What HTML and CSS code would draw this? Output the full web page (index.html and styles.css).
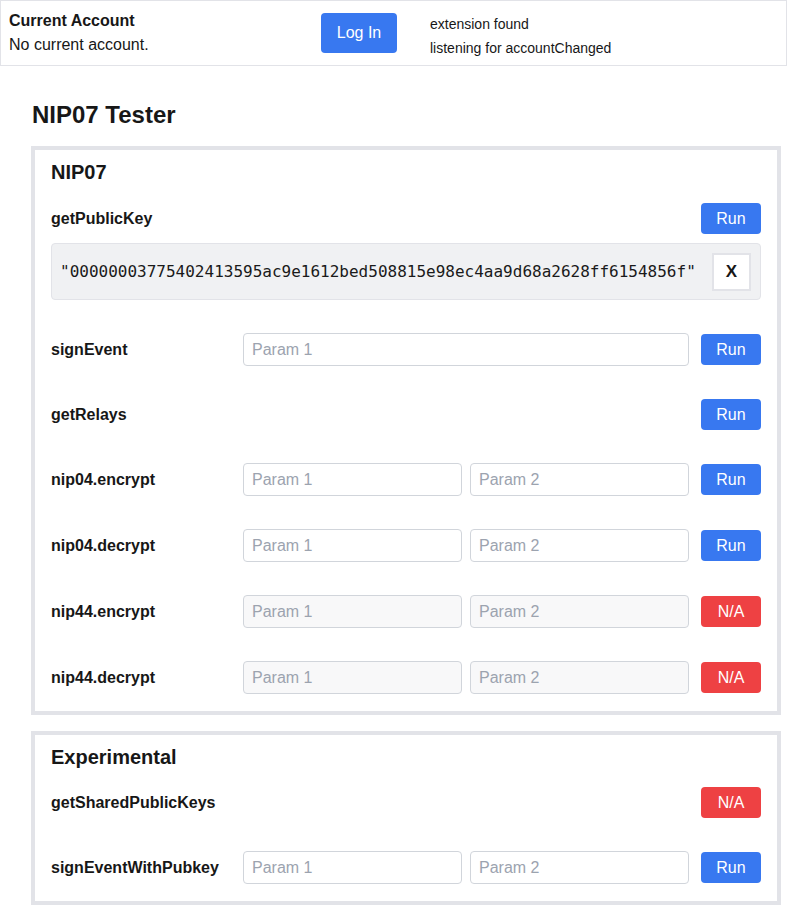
FILE: index.html
```html
<!DOCTYPE html>
<html lang="en">
<head>
<meta charset="utf-8">
<title>NIP07 Tester</title>
<link rel="stylesheet" href="styles.css">
</head>
<body>
<header class="topbar">
  <div class="account">
    <div class="account-title">Current Account</div>
    <div class="account-value">No current account.</div>
  </div>
  <button class="btn login">Log In</button>
  <div class="status">
    <div>extension found</div>
    <div>listening for accountChanged</div>
  </div>
</header>

<main class="main">
  <h1 class="page-title">NIP07 Tester</h1>

  <section class="card">
    <h2 class="card-title">NIP07</h2>

    <div class="row first">
      <div class="label">getPublicKey</div>
      <button class="btn run push">Run</button>
    </div>
    <div class="result">
      <span class="result-text">"00000003775402413595ac9e1612bed508815e98ec4aa9d68a2628ff6154856f"</span>
      <button class="close">X</button>
    </div>

    <div class="row">
      <div class="label">signEvent</div>
      <input class="param" placeholder="Param 1">
      <button class="btn run">Run</button>
    </div>

    <div class="row">
      <div class="label">getRelays</div>
      <button class="btn run push">Run</button>
    </div>

    <div class="row">
      <div class="label">nip04.encrypt</div>
      <input class="param" placeholder="Param 1">
      <input class="param" placeholder="Param 2">
      <button class="btn run">Run</button>
    </div>

    <div class="row">
      <div class="label">nip04.decrypt</div>
      <input class="param" placeholder="Param 1">
      <input class="param" placeholder="Param 2">
      <button class="btn run">Run</button>
    </div>

    <div class="row">
      <div class="label">nip44.encrypt</div>
      <input class="param" placeholder="Param 1" disabled>
      <input class="param" placeholder="Param 2" disabled>
      <button class="btn na">N/A</button>
    </div>

    <div class="row">
      <div class="label">nip44.decrypt</div>
      <input class="param" placeholder="Param 1" disabled>
      <input class="param" placeholder="Param 2" disabled>
      <button class="btn na">N/A</button>
    </div>
  </section>

  <section class="card">
    <h2 class="card-title">Experimental</h2>

    <div class="row first">
      <div class="label">getSharedPublicKeys</div>
      <button class="btn na push">N/A</button>
    </div>

    <div class="row">
      <div class="label">signEventWithPubkey</div>
      <input class="param" placeholder="Param 1">
      <input class="param" placeholder="Param 2">
      <button class="btn run">Run</button>
    </div>
  </section>
</main>
</body>
</html>
```

FILE: styles.css
```css
* { box-sizing: border-box; }

body {
  margin: 0;
  background: #ffffff;
  color: #171717;
  font-family: "Liberation Sans", Arial, sans-serif;
  font-size: 16px;
}

.topbar {
  display: flex;
  align-items: flex-start;
  border: 1px solid #e2e3e8;
  padding: 8px 8px;
  height: 66px;
}

.account {
  width: 312px;
  line-height: 24px;
}

.account-title { font-weight: bold; }

.btn {
  font-family: "Liberation Sans", Arial, sans-serif;
  font-size: 16px;
  color: #ffffff;
  border: none;
  border-radius: 4px;
  cursor: pointer;
  padding: 0;
}

.login {
  background: #3878f0;
  width: 76px;
  height: 40px;
  margin-top: 4px;
}

.status {
  margin-left: 33px;
  margin-top: 3px;
  font-size: 14px;
  line-height: 24px;
}

.main {
  padding: 33px 0 0 31px;
  width: 781px;
}

.page-title {
  margin: 0 0 0 1px;
  font-size: 24px;
  line-height: 32px;
  font-weight: bold;
}

.card {
  margin-top: 15px;
  border: 4px solid #e2e3e8;
  padding: 8px 16px 17px 16px;
}

.card + .card { margin-top: 16px; }

.card-title {
  margin: 0;
  font-size: 20px;
  line-height: 28px;
  font-weight: bold;
}

.row {
  display: flex;
  align-items: center;
  gap: 8px;
  margin-top: 33px;
}

.row.first { margin-top: 17px; }
.card + .card .row.first { margin-top: 16px; }

.label {
  width: 184px;
  font-weight: bold;
  line-height: 24px;
}

.param {
  flex: 1;
  min-width: 0;
  height: 33px;
  border: 1px solid #d1d5db;
  border-radius: 4px;
  padding: 0 8px;
  font-family: "Liberation Sans", Arial, sans-serif;
  font-size: 16px;
  color: #171717;
  background: #ffffff;
}

.param::placeholder { color: #9ca3af; }

.param:disabled { background: #f8f8f9; }

.run, .na {
  width: 60px;
  height: 31px;
  margin-left: 4px;
}

.run { background: #3878f0; }
.na { background: #ee4143; }

.push { margin-left: auto; }

.result {
  margin-top: 9px;
  display: flex;
  align-items: center;
  justify-content: space-between;
  background: #f0f1f3;
  border: 1px solid #e2e3e8;
  border-radius: 4px;
  padding: 8px 9px 8px 8px;
  height: 57px;
}

.result-text {
  font-family: "DejaVu Sans Mono", "Liberation Mono", monospace;
  font-size: 16px;
  color: #1a1a1a;
}

.close {
  width: 39px;
  height: 38px;
  background: #ffffff;
  border: 2px solid #e2e3e8;
  font-family: "Liberation Sans", Arial, sans-serif;
  font-size: 17px;
  font-weight: bold;
  color: #171717;
  padding: 0;
}
```
